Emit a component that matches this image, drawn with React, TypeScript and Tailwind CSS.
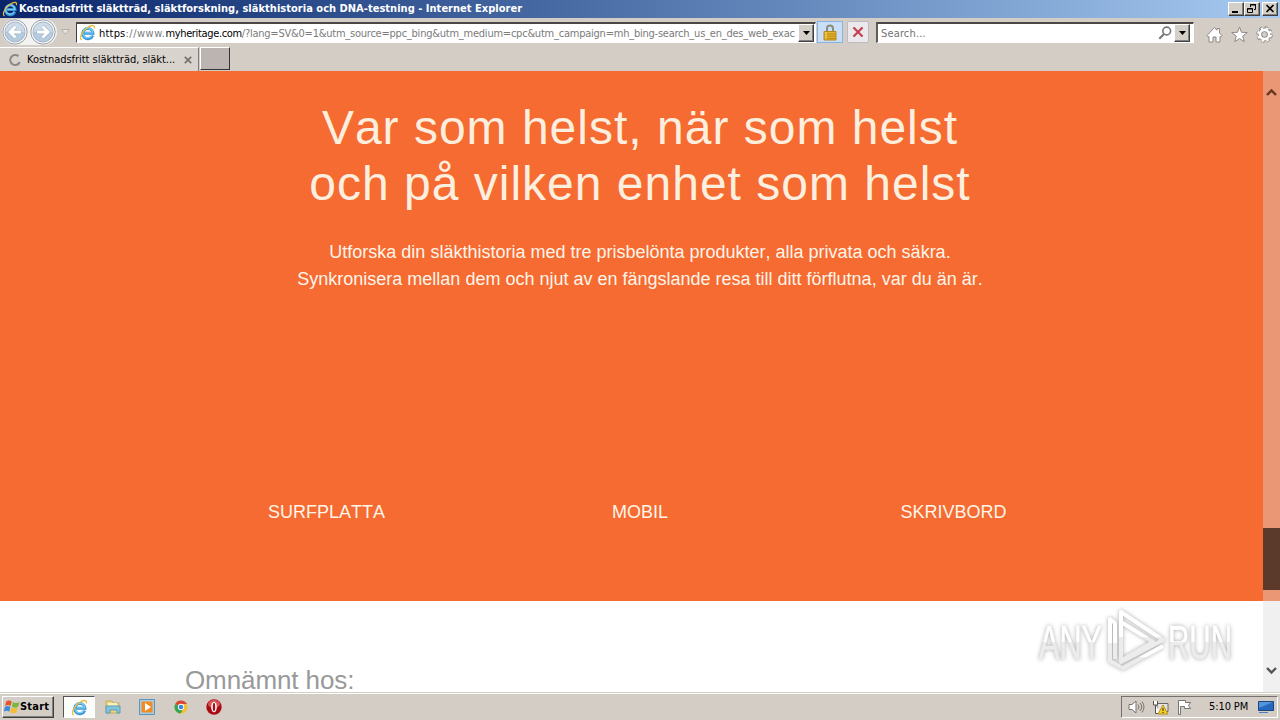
import type { ReactNode } from "react";

const devices = [
  { name: "SURFPLATTA", width: "w-[313px]" },
  { name: "MOBIL", width: "w-[314px]" },
  { name: "SKRIVBORD", width: "w-[313px]" },
];

function IeIcon({ className }: { className: string }) {
  return (
    <svg viewBox="0 0 16 16" className={className} fill="none">
      <path
        d="M12.9 10.8A4.9 4.9 0 1 1 13.2 8.7H5"
        stroke="#3793d6"
        strokeWidth="2.7"
      />
      <path
        d="M12.3 10.5A4.6 4.6 0 1 1 12.8 8.4H5.5"
        stroke="#79cdf5"
        strokeWidth="1.3"
      />
      <path
        d="M2.6 14.9C-.3 14 2.3 7.2 8 3.3 12 .7 15.6.6 14.3 4.2"
        stroke="#e8bd3c"
        strokeWidth="1.2"
      />
    </svg>
  );
}

function NavButton({ flip }: { flip?: boolean }) {
  return (
    <svg
      viewBox="0 0 26 26"
      className={`h-[26px] w-[26px] shrink-0 ${flip ? "-scale-x-100" : ""}`}
    >
      <circle cx="13" cy="13" r="12.2" fill="#f4f6f8" stroke="#9a9ea3" />
      <circle cx="13" cy="13" r="10" fill="#b4cbe0" stroke="#a3b5c6" />
      <path d="M3.5 13a9.5 9.5 0 0 1 19 0z" fill="#cddbe8" />
      <path
        d="M19.5 13H8m5.5-5.5L8 13l5.5 5.5"
        stroke="#93a9bf"
        strokeWidth="4"
        fill="none"
      />
      <path
        d="M19 13H8m5.5-5.5L8 13l5.5 5.5"
        stroke="#fff"
        strokeWidth="3"
        fill="none"
      />
    </svg>
  );
}

function DropButton() {
  return (
    <div className="flex h-[18px] w-4 shrink-0 items-center justify-center border border-t-white border-r-[#404040] border-b-[#404040] border-l-white bg-[#d4d0c8] shadow-[inset_-1px_-1px_#808080]">
      <svg viewBox="0 0 7 4" className="h-1 w-[7px]">
        <path d="M0 0h7L3.5 4z" fill="#000" />
      </svg>
    </div>
  );
}

function WindowButton({ children }: { children: ReactNode }) {
  return (
    <div className="h-3.5 w-4 border border-t-white border-r-[#404040] border-b-[#404040] border-l-white bg-[#d4d0c8] shadow-[inset_-1px_-1px_#808080]">
      <svg viewBox="0 0 14 12" className="h-3 w-3.5" fill="none" stroke="#000">
        {children}
      </svg>
    </div>
  );
}

function TitleBar() {
  return (
    <div className="flex h-[18px] items-center bg-linear-to-r from-[#0a246a] to-[#a6caf0] pr-0.5 pl-0.5">
      <IeIcon className="h-4 w-4" />
      <span className="ml-px flex-1 pt-px text-[11px] font-bold tracking-[0.025px] whitespace-nowrap text-white">
        Kostnadsfritt släktträd, släktforskning, släkthistoria och DNA-testning -
        Internet Explorer
      </span>
      <div className="flex">
        <WindowButton>
          <path d="M3 9h6" strokeWidth="2" />
        </WindowButton>
        <WindowButton>
          <path d="M5.5 4V1.5h5v5H9M5 2h6M2.5 5.5h5v4h-5zM2 6h6" />
        </WindowButton>
        <div className="w-0.5" />
        <WindowButton>
          <path d="m3.5 2 7 7m0-7-7 7" strokeWidth="1.6" />
        </WindowButton>
      </div>
    </div>
  );
}

function Toolbar() {
  return (
    <div className="flex h-[29px] items-center pb-px">
      <div className="ml-0.5 flex w-[55px] gap-0.5 rounded-full bg-[#f3f3f2]">
        <NavButton />
        <NavButton flip />
      </div>
      <svg viewBox="0 0 9 6" className="ml-1 h-1.5 w-[9px]">
        <path d="M.5.5h8l-4 5z" fill="#e8e5e0" stroke="#b2aea8" />
      </svg>
      <div className="ml-1.5 flex h-[21px] w-[740px] items-center border border-t-2 border-r-white border-b-white border-l-[#404040] border-t-[#4c4644] bg-white">
        <IeIcon className="ml-0.5 h-[17px] w-[17px] shrink-0" />
        <span className="ml-[3px] w-[699px] pt-[3px] text-[11px] leading-4 tracking-[-0.23px] whitespace-nowrap text-[#7b7b7b]">
          <span className="tracking-[0.2px] text-black">https</span>
          <span className="tracking-[0.5px]">://www.</span>
          <span className="tracking-[-0.35px] text-black">myheritage.com</span>
          /?lang=SV&amp;0=1&amp;utm_source=ppc_bing&amp;utm_medium=cpc&amp;utm_campaign=mh_bing-search_us_en_des_web_exac
        </span>
        <DropButton />
      </div>
      <div className="ml-px flex h-[22px] w-[26px] items-center justify-center border border-[#86b3e4] bg-[#c9dff7]">
        <svg viewBox="0 0 14 17" className="h-[17px] w-3.5">
          <path
            d="M4 8V4.5a3 3 0 0 1 6 0V8"
            fill="none"
            stroke="#8c8c7c"
            strokeWidth="2"
          />
          <path d="M1 7.5h12V16H1z" fill="#e5b32b" stroke="#b88716" />
          <path d="M1.5 10h11m-11 2.2h11m-11 2.2h11" stroke="#ba8a19" />
          <path d="M3 8v7" stroke="#f9dc72" />
        </svg>
      </div>
      <div className="ml-1 flex h-[22px] w-[22px] items-center justify-center rounded-xs border border-[#b9bac2] bg-[#ebe9ec]">
        <svg viewBox="0 0 12 12" className="h-3 w-3" fill="none">
          <path d="m1.5 1.5 9 9m0-9-9 9" stroke="#a76b73" strokeWidth="2.4" />
          <path d="m1.5 1.5 9 9m0-9-9 9" stroke="#d93945" strokeWidth="1.4" />
        </svg>
      </div>
      <div className="ml-[7px] flex h-[21px] w-[318px] items-center border border-t-2 border-r-white border-b-white border-l-2 border-l-[#605a58] border-t-[#4c4644] bg-white pr-[3px]">
        <span className="ml-[3px] flex-1 pt-[3px] text-[11px] leading-4 tracking-[0.15px] text-[#737373]">
          Search...
        </span>
        <svg viewBox="0 0 14 14" className="mr-0.5 h-3.5 w-3.5" fill="none">
          <circle cx="8.7" cy="5" r="3.9" stroke="#777" strokeWidth="1.6" />
          <path d="m6 8-4.7 4.7" stroke="#777" strokeWidth="2" />
        </svg>
        <DropButton />
      </div>
      <div className="mt-[5px] ml-3 flex gap-2">
        <svg viewBox="0 0 17 17" className="h-[17px] w-[17px]">
          <path
            d="M1 9.5 8.5 1.5l2.5 2.7V2.5h2.5V7L16 9.5 14.8 11l-.8-.7V16h-4v-5H7v5H3v-5.7l-.8.7z"
            fill="#fff"
            stroke="#8c8987"
          />
        </svg>
        <svg viewBox="0 0 17 17" className="h-[17px] w-[17px]">
          <path
            d="m8.5 1 2 5.3 5.8.2-4.6 3.6 1.6 5.6-4.8-3.2-4.8 3.2 1.6-5.6L.7 6.5l5.8-.2z"
            fill="#fff"
            stroke="#8c8987"
          />
        </svg>
        <svg viewBox="0 0 17 17" className="h-[17px] w-[17px]" fill="none">
          <circle
            cx="8.5"
            cy="8.5"
            r="6.7"
            stroke="#8c8987"
            strokeWidth="3"
            strokeDasharray="3.3 1.96"
          />
          <circle cx="8.5" cy="8.5" r="4.6" stroke="#8c8987" strokeWidth="4.4" />
          <circle
            cx="8.5"
            cy="8.5"
            r="6.5"
            stroke="#fff"
            strokeWidth="2"
            strokeDasharray="2.3 2.805"
            strokeDashoffset="-.5"
          />
          <circle cx="8.5" cy="8.5" r="4.6" stroke="#fff" strokeWidth="2.6" />
        </svg>
      </div>
    </div>
  );
}

function TabRow() {
  return (
    <div className="flex h-6 text-[11px]">
      <div className="flex w-[199px] items-center border-t border-r border-t-white border-r-[#807b78] bg-[#d9d3cd] pl-2">
        <svg viewBox="0 0 14 14" className="h-3.5 w-3.5" fill="none">
          <path
            d="M11.8 9A5 5 0 1 1 10.5 3.2"
            stroke="#8c8986"
            strokeWidth="2"
          />
        </svg>
        <span className="ml-[5px] w-[153px] pt-0.5 tracking-[-0.03px] whitespace-nowrap">
          Kostnadsfritt släktträd, släkt...
        </span>
        <svg viewBox="0 0 8 8" className="ml-1 h-2 w-2">
          <path d="m.8.8 6.4 6.4m0-6.4L.8 7.2" stroke="#77716e" strokeWidth="1.7" />
        </svg>
      </div>
      <div className="ml-px h-[23px] w-[30px] border border-t-white border-r-[#333] border-b-[#333] border-l-white bg-[#bcb4b1]" />
    </div>
  );
}

function Watermark() {
  return (
    <svg
      viewBox="0 0 216 70"
      className="absolute top-[534px] left-[1032px] h-[70px] w-[216px] drop-shadow-[0_0_2px_#aaaaaa]"
      fill="none"
    >
      <defs>
        <linearGradient id="mark" x1="0" y1="0" x2="0" y2="1">
          <stop offset=".5" stopColor="#fff" />
          <stop offset=".5" stopColor="#ececec" />
        </linearGradient>
      </defs>
      <g
        fill="url(#mark)"
        stroke="url(#mark)"
        strokeWidth=".6"
        fontFamily="'Liberation Sans Narrow', 'Liberation Sans', sans-serif"
        fontSize="49"
      >
        <text x="7" y="54" textLength="63" lengthAdjust="spacingAndGlyphs">
          ANY
        </text>
        <text x="136" y="54" textLength="64" lengthAdjust="spacingAndGlyphs">
          RUN
        </text>
      </g>
      <g stroke="url(#mark)" strokeWidth="4" strokeLinejoin="round">
        <path d="M83 54V18l-5-4v42l11 6" />
        <path d="M89 17v40l42-22-42-28v10l32 20-31 18" />
        <path d="m89 64 42-23" />
      </g>
    </svg>
  );
}

function Scrollbar() {
  return (
    <div className="absolute top-0 right-0 flex h-full w-[17px] flex-col justify-between bg-[#d9d9d9]/40 py-[17px]">
      <svg viewBox="0 0 17 9" className="h-[9px] w-[17px]" fill="none">
        <path d="m4 7 4.5-4.5L13 7" stroke="#68351f" strokeWidth="2.4" />
      </svg>
      <div className="absolute top-[457px] h-[62px] w-[17px] bg-[#5b392b]" />
      <svg viewBox="0 0 17 9" className="h-[9px] w-[17px]" fill="none">
        <path d="m4 2 4.5 4.5L13 2" stroke="#555" strokeWidth="2.4" />
      </svg>
    </div>
  );
}

function Page() {
  return (
    <main className="relative h-[621px] bg-white font-['Liberation_Sans',sans-serif] [font-kerning:none]">
      <section className="h-[530px] bg-[#f56b32] pt-[29px] text-center text-[#fcefdf]">
        <h1 className="text-[48px] leading-[56px] tracking-[1px]">
          Var som helst, när som helst
          <br />
          och på vilken enhet som helst
        </h1>
        <p className="mt-[27px] text-lg leading-[27px] text-[#fff5e9]">
          Utforska din släkthistoria med tre prisbelönta produkter, alla privata
          och säkra.
          <br />
          Synkronisera mellan dem och njut av en fängslande resa till ditt
          förflutna, var du än är.
        </p>
        <div className="mt-[206px] flex justify-center text-lg leading-[27px] text-[#fff5e9]">
          {devices.map((device) => (
            <div key={device.name} className={device.width}>
              {device.name}
            </div>
          ))}
        </div>
      </section>
      <h2 className="pt-[67px] pl-[185px] text-[26px] leading-[25px] tracking-[-0.1px] text-[#999]">
        Omnämnt hos:
      </h2>
      <Watermark />
      <Scrollbar />
    </main>
  );
}

function Taskbar() {
  return (
    <footer className="flex h-7 items-center border-t border-[#d4d0c8] bg-[#d4cdc6] pt-px shadow-[inset_0_1px_#fff]">
      <div className="ml-0.5 flex h-[22px] w-[52px] items-center border border-t-white border-r-[#404040] border-b-[#404040] border-l-white pl-px shadow-[inset_-1px_-1px_#808080]">
        <svg viewBox="1 1 14.5 14" className="h-4 w-4 shrink-0">
          <path d="M3 3q2.5-1.8 5 0L7 7.2q-2.5-1.8-5 0z" fill="#e65425" />
          <path d="M9 3.5q2.5 1.8 6 0l-1.2 4.3q-3 1.7-5.6 0z" fill="#7ab642" />
          <path d="M1.8 8q2.5-1.8 5 0l-1 4.3q-2.5-1.8-5 0z" fill="#3e8bd5" />
          <path d="M7.8 8.5q2.5 1.8 5.6 0l-1.2 4.3q-2.5 1.8-5.4 0z" fill="#f6bc2d" />
        </svg>
        <span className="pt-px text-[11px] font-bold tracking-[0.2px]">
          Start
        </span>
      </div>
      <div className="ml-[9px] flex h-[22px] w-8 items-center justify-center border border-t-[#555] border-r-white border-b-white border-l-[#555] bg-[#fcfcfb]">
        <IeIcon className="h-[17px] w-[17px]" />
      </div>
      <svg viewBox="0 0 16 16" className="ml-2.5 h-4 w-4">
        <path d="M1 2h6l1 2h6v10H1z" fill="#edd57c" stroke="#c4ad5e" />
        <path d="M3 4h9v4H3z" fill="#f8f0be" />
        <path d="M1 7h14v7h-3v-3H5v3H1z" fill="#82c4dc" stroke="#5b9db8" />
      </svg>
      <svg viewBox="0 0 16 16" className="ml-[18px] h-4 w-4">
        <path d="M.5.5h15v15H.5z" fill="#a9cce7" stroke="#5b92be" />
        <path d="M2.5 2.5h11v11h-11z" fill="#f28b22" />
        <path d="m6 4 6 4-6 4z" fill="#fff" />
      </svg>
      <svg viewBox="0 0 16 16" className="ml-[19px] h-3.5 w-3.5">
        <circle cx="8" cy="8" r="7.5" fill="#f2c230" />
        <path d="M8 8 1.4 4.5A7.5 7.5 0 0 1 14.7 4.7H8z" fill="#da4535" />
        <path d="M1.4 4.5A7.5 7.5 0 0 0 7.5 15.5L11 9.5 8 8z" fill="#35a653" />
        <circle cx="8" cy="8" r="3.6" fill="#fff" />
        <circle cx="8" cy="8" r="2.7" fill="#4285db" />
      </svg>
      <svg viewBox="0 0 16 16" className="ml-[18px] h-4 w-4">
        <circle cx="8" cy="8" r="7.7" fill="#a90d13" />
        <ellipse cx="8" cy="5" rx="6" ry="4" fill="#d65658" />
        <ellipse cx="8" cy="8" rx="2.8" ry="5.3" fill="#fff" />
        <ellipse cx="8" cy="8" rx="1.2" ry="4.3" fill="#a90d13" />
      </svg>
      <div className="mr-0.5 ml-auto flex h-[22px] w-[157px] items-center border border-t-[#77716e] border-r-white border-b-white border-l-[#77716e] pl-1.5">
        <svg viewBox="0 0 17 16" className="h-4 w-[17px]" fill="none" stroke="#77736f">
          <path d="M1 5.5h3L8 2v12l-4-3.5H1z" fill="#fff" />
          <path d="M10 5.5q2 2.5 0 5M12 4q3.5 4 0 8M14 2.5q4 5.5 0 11" />
        </svg>
        <svg viewBox="0 0 17 16" className="ml-[7px] h-4 w-[17px]">
          <path d="M5 4.5h11v8H5z" fill="#e5e3e0" stroke="#696663" />
          <path d="M1.5 2v4h4V2M3.5 6v8.5h5" fill="#fff" stroke="#54514e" />
          <path d="m11 6 5 9H6z" fill="#f7cf24" stroke="#b4911c" />
          <path d="M11 9v3m0 1v1" stroke="#222" />
        </svg>
        <svg viewBox="0 0 16 16" className="ml-[7px] h-4 w-4">
          <path
            d="M2.5 15.5v-14h7v2h5l-2 3 2 3h-6v-2h-4v8z"
            fill="#fff"
            stroke="#77736f"
          />
        </svg>
        <span className="ml-[17px] w-[43px] pt-px text-[11px] tracking-[-0.1px] whitespace-nowrap">
          5:10 PM
        </span>
        <svg viewBox="0 0 16 14" className="ml-1.5 h-3.5 w-4">
          <path d="M.5 1.5h15v9H.5z" fill="#2469be" stroke="#1b467d" />
          <path d="M1 2h14L1 8z" fill="#5594d9" />
          <path d="M1 12.5h9" stroke="#4a80bf" />
        </svg>
      </div>
    </footer>
  );
}

export default function App() {
  return (
    <div className="flex h-[720px] w-[1280px] flex-col overflow-hidden bg-[#d4cdc6] font-['DejaVu_Sans_Condensed','DejaVu_Sans',sans-serif] text-black">
      <TitleBar />
      <Toolbar />
      <TabRow />
      <Page />
      <Taskbar />
    </div>
  );
}
